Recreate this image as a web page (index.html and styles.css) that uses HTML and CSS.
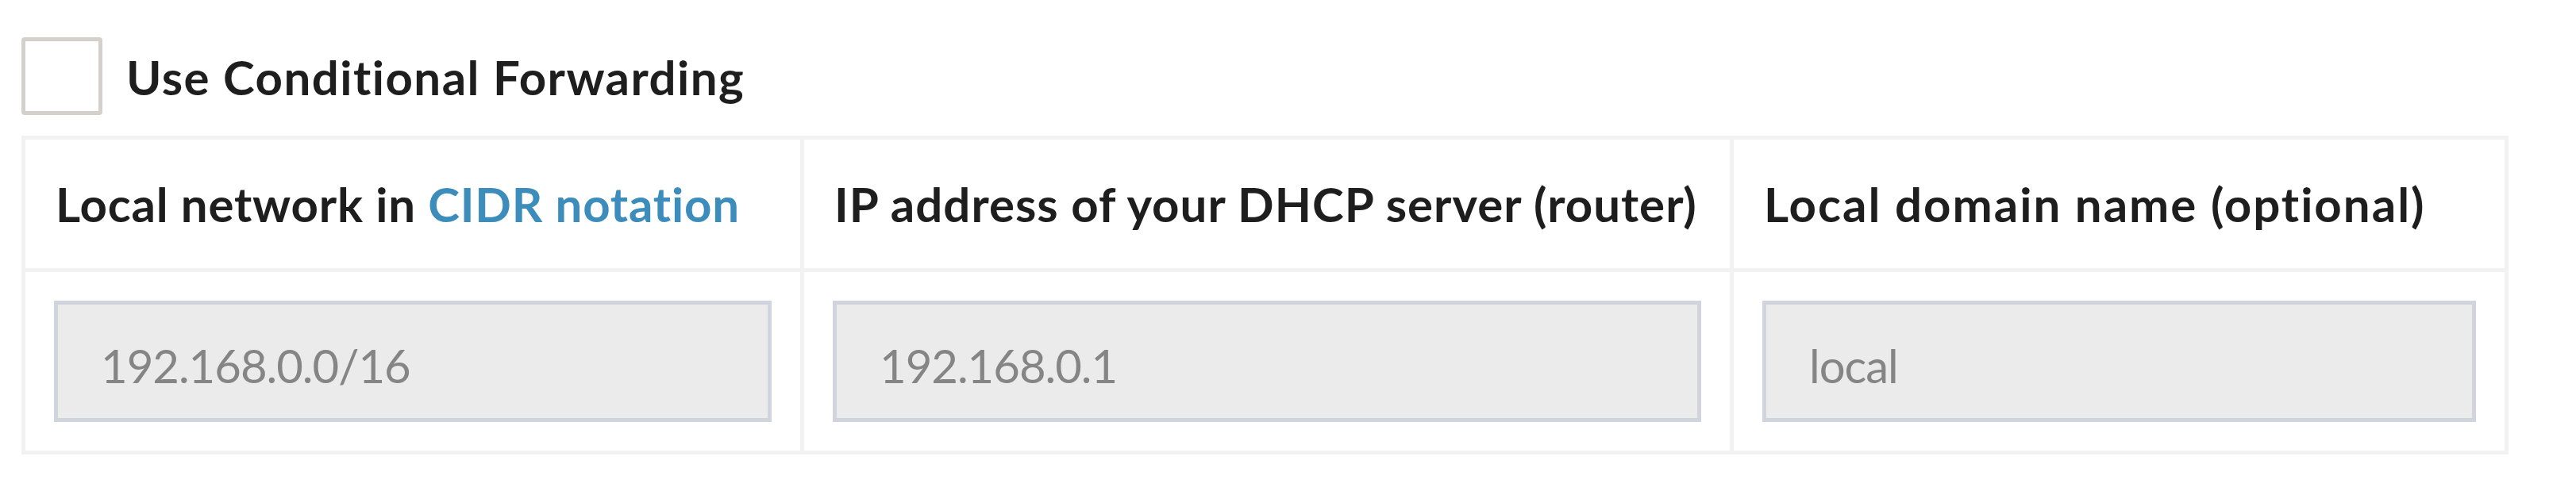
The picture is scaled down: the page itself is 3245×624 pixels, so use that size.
FILE: index.html
```html
<!DOCTYPE html>
<html lang="en">
<head>
<meta charset="utf-8">
<title>Conditional Forwarding</title>
<link rel="stylesheet" href="styles.css">
</head>
<body>
<div class="form-group">
  <label class="check-row">
    <span class="check-box"></span>
    <span class="check-label">Use Conditional Forwarding</span>
  </label>
  <div class="cf-table">
    <div class="cf-cell cf-head cf-head-narrow">Local network in <a class="cf-link" href="#">CIDR notation</a></div>
    <div class="cf-cell cf-head">IP address of your DHCP server (router)</div>
    <div class="cf-cell cf-head cf-head-wide">Local domain name (optional)</div>
    <div class="cf-cell"><input class="cf-input" type="text" value="192.168.0.0/16" disabled></div>
    <div class="cf-cell"><input class="cf-input" type="text" value="192.168.0.1" disabled></div>
    <div class="cf-cell"><input class="cf-input" type="text" value="local" disabled></div>
  </div>
</div>
</body>
</html>
```
FILE: styles.css
```css
html, body {
  margin: 0;
  padding: 0;
  background: #ffffff;
}

body {
  font-family: "Lato", "Open Sans", sans-serif;
  color: #333333;
}

.form-group {
  padding: 47px 0 0 27px;
}

.check-row {
  display: flex;
  align-items: center;
  gap: 30px;
  height: 98px;
}

.check-box {
  box-sizing: border-box;
  width: 102px;
  height: 98px;
  border: 5px solid #d4d0cc;
  border-radius: 4px;
  background: #ffffff;
  flex: none;
}

.check-label {
  font-size: 60px;
  font-weight: 700;
  letter-spacing: 1.45px;
  color: #1e1e1e;
  position: relative;
  top: 1px;
}

.cf-table {
  margin-top: 26px;
  display: grid;
  grid-template-columns: 976px 1166px 971px;
  gap: 5px;
  padding: 5px;
  background: #f2f2f2;
  width: max-content;
}

.cf-cell {
  background: #ffffff;
  padding: 36px;
}

.cf-head {
  font-size: 60px;
  font-weight: 700;
  line-height: 90px;
  letter-spacing: 1px;
  color: #1e1e1e;
  white-space: nowrap;
  padding-left: 38px;
}

.cf-head-narrow {
  letter-spacing: 0.8px;
}

.cf-head-wide {
  letter-spacing: 2px;
}

.cf-link {
  color: #3c8dbc;
  text-decoration: none;
}

.cf-input {
  display: block;
  box-sizing: border-box;
  width: 100%;
  height: 153px;
  margin: 0;
  padding: 10px 54px 0;
  border: 5px solid #d0d4dc;
  border-radius: 0;
  background: #ebebeb;
  font-family: "Lato", "Open Sans", sans-serif;
  font-size: 58px;
  letter-spacing: -1px;
  color: #858585;
  -webkit-text-fill-color: #858585;
  opacity: 1;
}
```
